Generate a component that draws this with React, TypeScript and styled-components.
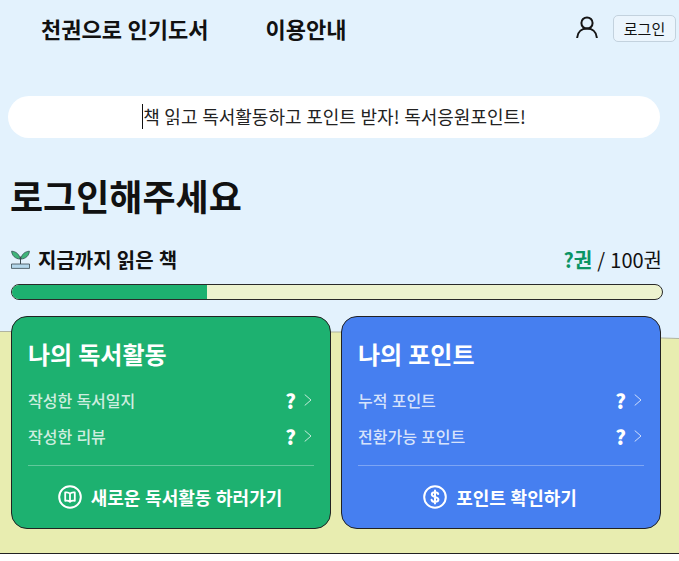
import styled, { createGlobalStyle } from "styled-components";

const GlobalStyle = createGlobalStyle`
  html, body {
    margin: 0;
    padding: 0;
    background: #fff;
    font-family: "Noto Sans CJK KR", "Noto Sans", sans-serif;
    word-spacing: 0.04em;
    color: #111;
  }
  * { box-sizing: border-box; }
`;

const Page = styled.div`
  position: relative;
  width: 679px;
  height: 554px;
  background: #e3f2fd;
  border-bottom: 1px solid #222;
  overflow: hidden;
`;
const Hill = styled.svg`
  position: absolute;
  left: 0;
  top: 330px;
  width: 679px;
  height: 224px;
`;
const Content = styled.div`
  position: relative;
  display: flex;
  flex-direction: column;
`;
const Header = styled.header`
  height: 56px;
  display: flex;
  align-items: center;
  padding: 0 3px 0 41px;
`;
const Nav = styled.nav`
  display: flex;
  gap: 57px;
  flex: 1;
`;
const NavItem = styled.a`
  font-size: 22px;
  font-weight: 700;
  line-height: 30px;
  color: #111;
`;
const UserArea = styled.div`
  display: flex;
  align-items: center;
  gap: 15px;
  svg {
    margin-bottom: 2px;
  }
`;
const LoginButton = styled.button`
  width: 63px;
  height: 27px;
  margin-top: 1px;
  padding: 0;
  border: 1px solid #c3d2de;
  border-radius: 5px;
  background: #ebf5fd;
  font-family: inherit;
  font-size: 15px;
  color: #111;
`;
const Banner = styled.div`
  width: 652px;
  height: 42px;
  margin: 40px 0 0 8px;
  padding-bottom: 2px;
  border-radius: 21px;
  background: #fff;
  display: flex;
  align-items: center;
  justify-content: center;
  font-size: 18px;
  line-height: 25px;
  color: #222;
`;
const BannerText = styled.span`
  border-left: 1px solid #111;
  white-space: nowrap;
`;
const Title = styled.h1`
  margin: 32px 0 0 10px;
  font-size: 36px;
  font-weight: 700;
  line-height: 50px;
  color: #111;
`;
const ProgressHead = styled.div`
  display: flex;
  justify-content: space-between;
  align-items: center;
  margin: 24px 17px 0 11px;
  height: 30px;
`;
const ProgressLabel = styled.div`
  display: flex;
  align-items: center;
  gap: 8px;
  font-size: 20px;
  font-weight: 700;
  color: #111;
`;
const ProgressCount = styled.div`
  font-size: 20px;
  font-weight: 400;
  color: #111;
  b {
    font-weight: 700;
    color: #0a9464;
  }
`;
const Bar = styled.div`
  width: 652px;
  height: 16px;
  margin: 10px 0 0 11px;
  border: 1px solid #2a2a2a;
  border-radius: 8px;
  background: #edf3cf;
  overflow: hidden;
`;
const BarFill = styled.div`
  height: 100%;
  background: #1db170;
`;
const Cards = styled.div`
  display: grid;
  grid-template-columns: 320px 320px;
  gap: 10px;
  margin: 16px 0 0 11px;
`;
const Card = styled.section<{ $color: string }>`
  height: 213px;
  padding: 19px 16px 0;
  border: 1px solid #222;
  border-radius: 16px;
  background: ${props => props.$color};
  color: #fff;
  display: flex;
  flex-direction: column;
`;
const CardTitle = styled.h2`
  margin: 0 0 10px;
  font-size: 24px;
  font-weight: 700;
  line-height: 36px;
`;
const Row = styled.div`
  height: 36px;
  display: flex;
  align-items: center;
  padding-right: 2px;
  font-size: 16px;
  font-weight: 500;
  color: rgba(255, 255, 255, 0.8);
`;
const RowLabel = styled.span`
  flex: 1;
`;
const RowValue = styled.b`
  font-size: 20px;
  font-weight: 900;
  color: #fff;
  margin-right: 8px;
`;
const Divider = styled.hr`
  width: 100%;
  margin: 11px 0 0;
  border: 0;
  border-top: 1px solid rgba(255, 255, 255, 0.3);
`;
const CardAction = styled.a`
  flex: 1;
  display: flex;
  align-items: center;
  justify-content: center;
  gap: 9px;
  padding-right: 2px;
  font-size: 18px;
  font-weight: 700;
  color: #fff;
`;

const Chevron = () => (
  <svg width="8" height="12" viewBox="0 0 8 12" fill="none" stroke="rgba(255,255,255,0.75)" strokeWidth="1" strokeLinecap="round" strokeLinejoin="round">
    <path d="M1 .8 L7 6 L1 11.2" />
  </svg>
);

const UserIcon = () => (
  <svg width="22" height="22" viewBox="0 0 22 22" fill="none" stroke="#151515" strokeWidth="2" strokeLinecap="round">
    <circle cx="11" cy="7" r="5.6" />
    <path d="M1.2 21.5 C1.8 15.5 6 12.6 11 12.6 C16 12.6 20.2 15.5 20.8 21.5" />
  </svg>
);

const SproutIcon = () => (
  <svg width="19" height="19" viewBox="0 0 19 19" fill="none">
    <path d="M9 9 C8.6 4.4 5 1.4 .6 1.2 C1 5.6 4.2 8.8 9 9 Z" fill="#3fb57a" stroke="#2f4f4f" strokeWidth=".8" />
    <path d="M10 9 C10.4 4.4 14 1.4 18.4 1.2 C18 5.6 14.8 8.8 10 9 Z" fill="#3fb57a" stroke="#2f4f4f" strokeWidth=".8" />
    <path d="M9.5 6.5 V14" stroke="#3a4a50" strokeWidth="1" />
    <path d="M.5 14 H18.5 V18.4 H.5 Z" fill="#b4d8ec" stroke="#3a4a50" strokeWidth=".8" />
  </svg>
);

const BookCircleIcon = () => (
  <svg width="24" height="24" viewBox="0 0 24 24" fill="none" stroke="#fff" strokeWidth="2">
    <circle cx="12" cy="12" r="10.8" />
    <path d="M12 8.6 C11 7.4 9 7.2 7.2 7.4 V15.8 C9 15.6 11 15.8 12 16.8 C13 15.8 15 15.6 16.8 15.8 V7.4 C15 7.2 13 7.4 12 8.6 Z M12 8.6 V16.8" strokeWidth="1.8" strokeLinejoin="round" />
  </svg>
);

const CoinIcon = () => (
  <svg width="24" height="24" viewBox="0 0 24 24" fill="none" stroke="#fff" strokeWidth="2" strokeLinecap="round">
    <circle cx="12" cy="12" r="10.8" />
    <path d="M15.2 9 C15 7.8 13.8 7.2 12 7.2 C10 7.2 8.8 8.1 8.8 9.5 C8.8 12.6 15.4 11.3 15.4 14.5 C15.4 16 14 16.8 12 16.8 C10 16.8 8.8 16 8.6 14.8 M12 5.6 V18.4" />
  </svg>
);

export default function App() {
  return (
    <>
      <GlobalStyle />
      <Page>
        <Hill viewBox="0 0 679 224" preserveAspectRatio="none">
          <path d="M0 1.5 L340 2 C460 3 570 5 679 8.5 V224 H0 Z" fill="#e8edb0" />
          <path d="M0 1.5 L340 2 C460 3 570 5 679 8.5" fill="none" stroke="#b0b4a0" strokeWidth="1" />
        </Hill>
        <Content>
          <Header>
            <Nav>
              <NavItem>천권으로 인기도서</NavItem>
              <NavItem>이용안내</NavItem>
            </Nav>
            <UserArea>
              <UserIcon />
              <LoginButton>로그인</LoginButton>
            </UserArea>
          </Header>
          <Banner>
            <BannerText>책 읽고 독서활동하고 포인트 받자! 독서응원포인트!</BannerText>
          </Banner>
          <Title>로그인해주세요</Title>
          <ProgressHead>
            <ProgressLabel>
              <SproutIcon />
              지금까지 읽은 책
            </ProgressLabel>
            <ProgressCount>
              <b>?권</b> / 100권
            </ProgressCount>
          </ProgressHead>
          <Bar>
            <BarFill style={{ width: "30%" }} />
          </Bar>
          <Cards>
            <Card $color="#1db170">
              <CardTitle>나의 독서활동</CardTitle>
              <Row>
                <RowLabel>작성한 독서일지</RowLabel>
                <RowValue>?</RowValue>
                <Chevron />
              </Row>
              <Row>
                <RowLabel>작성한 리뷰</RowLabel>
                <RowValue>?</RowValue>
                <Chevron />
              </Row>
              <Divider />
              <CardAction>
                <BookCircleIcon />
                새로운 독서활동 하러가기
              </CardAction>
            </Card>
            <Card $color="#467ff0">
              <CardTitle>나의 포인트</CardTitle>
              <Row>
                <RowLabel>누적 포인트</RowLabel>
                <RowValue>?</RowValue>
                <Chevron />
              </Row>
              <Row>
                <RowLabel>전환가능 포인트</RowLabel>
                <RowValue>?</RowValue>
                <Chevron />
              </Row>
              <Divider />
              <CardAction>
                <CoinIcon />
                포인트 확인하기
              </CardAction>
            </Card>
          </Cards>
        </Content>
      </Page>
    </>
  );
}
